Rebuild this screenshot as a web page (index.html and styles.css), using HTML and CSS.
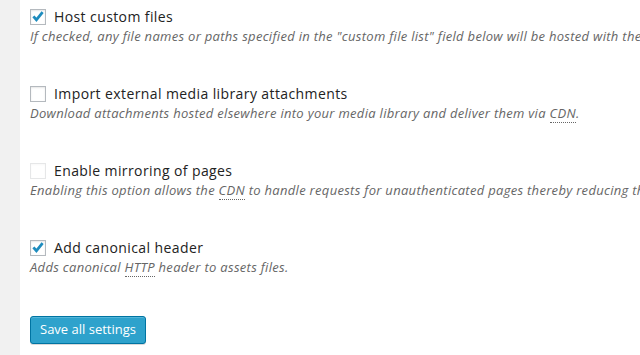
FILE: index.html
```html
<html>
  <head>
    <link rel="stylesheet" href="styles.css">
  </head>
  <body>

    <div class="page">
      <div class="sidebar"></div>

      <div class="content">
        <div class="option">
          <label class="option-label">
            <span class="checkbox checked">
              <svg viewBox="0 0 16 16" width="16" height="16"><path d="M3.4 7.4 L6.4 10.8 L12.6 3.2" fill="none" stroke="#1e8cbe" stroke-width="2.8"/></svg>
            </span>
            Host custom files
          </label>
          <div class="description">If checked, any file names or paths specified in the "custom file list" field below will be hosted with the CDN.</div>
        </div>

        <div class="option">
          <label class="option-label">
            <span class="checkbox"></span>
            Import external media library attachments
          </label>
          <div class="description">Download attachments hosted elsewhere into your media library and deliver them via <acronym>CDN</acronym>.</div>
        </div>

        <div class="option">
          <label class="option-label">
            <span class="checkbox disabled"></span>
            Enable mirroring of pages
          </label>
          <div class="description">Enabling this option allows the <acronym>CDN</acronym> to handle requests for unauthenticated pages thereby reducing the load.</div>
        </div>

        <div class="option">
          <label class="option-label">
            <span class="checkbox checked">
              <svg viewBox="0 0 16 16" width="16" height="16"><path d="M3.4 7.4 L6.4 10.8 L12.6 3.2" fill="none" stroke="#1e8cbe" stroke-width="2.8"/></svg>
            </span>
            Add canonical header
          </label>
          <div class="description">Adds canonical <acronym>HTTP</acronym> header to assets files.</div>
        </div>

        <div class="submit">
          <div class="button-primary">Save all settings</div>
        </div>
      </div>
    </div>

  </body>
</html>
```

FILE: styles.css
```css
body {
  font-family: "Open Sans", sans-serif;
  margin: 0;
  color: #222;
  background: #fff;
  overflow: hidden;
}

.page {
  display: flex;
  height: 355px;
}

.sidebar {
  width: 20px;
  flex-shrink: 0;
  background: #f1f1f1;
}

.content {
  flex: 1;
  min-width: 0;
  padding: 7px 0 0 10px;
  white-space: nowrap;
  overflow: hidden;
}

.option {
  height: 77px;
}

.option-label {
  display: flex;
  align-items: center;
  height: 20px;
  font-size: 14px;
  line-height: 20px;
  letter-spacing: 0.4px;
}

.checkbox {
  display: block;
  width: 14px;
  height: 14px;
  margin-right: 8px;
  border: 1px solid #b4b9be;
  background: #fff;
  box-shadow: inset 0 1px 2px rgba(0, 0, 0, 0.1);
  position: relative;
}

.checkbox svg {
  position: absolute;
  left: -1px;
  top: -1px;
}

.checkbox.disabled {
  border-color: #e6e7e8;
  box-shadow: inset 0 1px 2px rgba(0, 0, 0, 0.03);
}

.description {
  font-size: 13px;
  font-style: italic;
  line-height: 18px;
  letter-spacing: 0.3px;
  color: #666;
}

acronym {
  border-bottom: 1px dotted #666;
}

.submit {
  padding-top: 1px;
}

.button-primary {
  display: inline-block;
  height: 26px;
  line-height: 25px;
  padding: 0 9px;
  font-size: 13px;
  color: #fff;
  background: #2ea2cc;
  border: 1px solid #0074a2;
  border-radius: 3px;
  box-shadow: inset 0 1px 0 rgba(120, 200, 230, 0.5), 0 1px 0 rgba(0, 0, 0, 0.15);
}
```
